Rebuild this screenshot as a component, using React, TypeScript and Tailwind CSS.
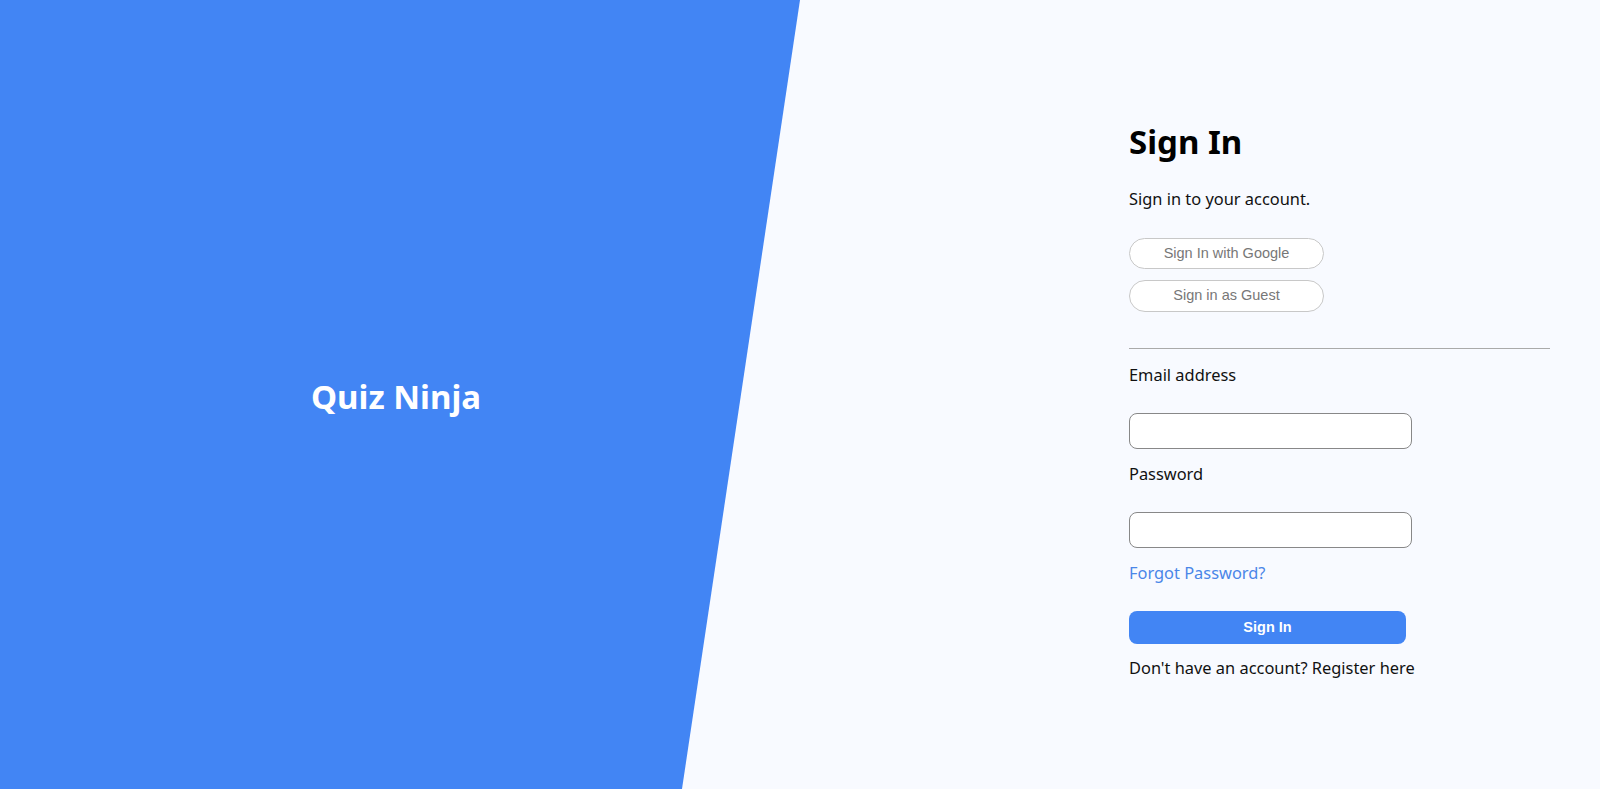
export default function App() {
  return (
    <div className="flex h-screen w-full overflow-hidden bg-[#f8faff] font-['Noto_Sans',sans-serif] text-[#111]">
      <div className="flex w-1/2 shrink-0 items-center justify-center bg-[#4285f4] pr-[8px] pt-[4px] [clip-path:polygon(0_0,100%_0,85.25%_100%,0_100%)]">
        <h1 className="text-[33px] font-bold text-white">Quiz Ninja</h1>
      </div>
      <div className="flex-1 pl-[329px] pr-[50px] pt-[120px]">
        <h2 className="text-[33px] font-bold leading-[44px] text-black">Sign In</h2>
        <p className="mt-[23px] text-[16.4px] leading-[24px]">Sign in to your account.</p>
        <div className="mt-[27px] flex flex-col gap-[11px]">
          <button className="h-[31px] w-[195px] rounded-full border border-[#c8c8c8] bg-white font-['Liberation_Sans',sans-serif] text-[14.5px] text-[#777]">
            Sign In with Google
          </button>
          <button className="h-[32px] w-[195px] rounded-full border border-[#c8c8c8] bg-white font-['Liberation_Sans',sans-serif] text-[14.5px] text-[#777]">
            Sign in as Guest
          </button>
        </div>
        <hr className="mt-[36px] border-t border-[#aaa]" />
        <label className="mt-[14px] block text-[16.4px] leading-[24px]">Email address</label>
        <input type="email" className="mt-[26px] block h-[36px] w-[283px] rounded-lg border border-[#888] bg-white px-2" />
        <label className="mt-[13px] block text-[16.4px] leading-[24px]">Password</label>
        <input type="password" className="mt-[26px] block h-[36px] w-[283px] rounded-lg border border-[#888] bg-white px-2" />
        <a href="#" className="mt-[13px] block text-[16.4px] leading-[24px] text-[#4a86e8]">Forgot Password?</a>
        <button className="mt-[26px] h-[33px] w-[277px] rounded-lg bg-[#4285f4] font-['Liberation_Sans',sans-serif] text-[14.5px] font-bold text-white">
          Sign In
        </button>
        <p className="mt-[12px] text-[16.4px] leading-[24px]">Don't have an account? Register here</p>
      </div>
    </div>
  );
}
